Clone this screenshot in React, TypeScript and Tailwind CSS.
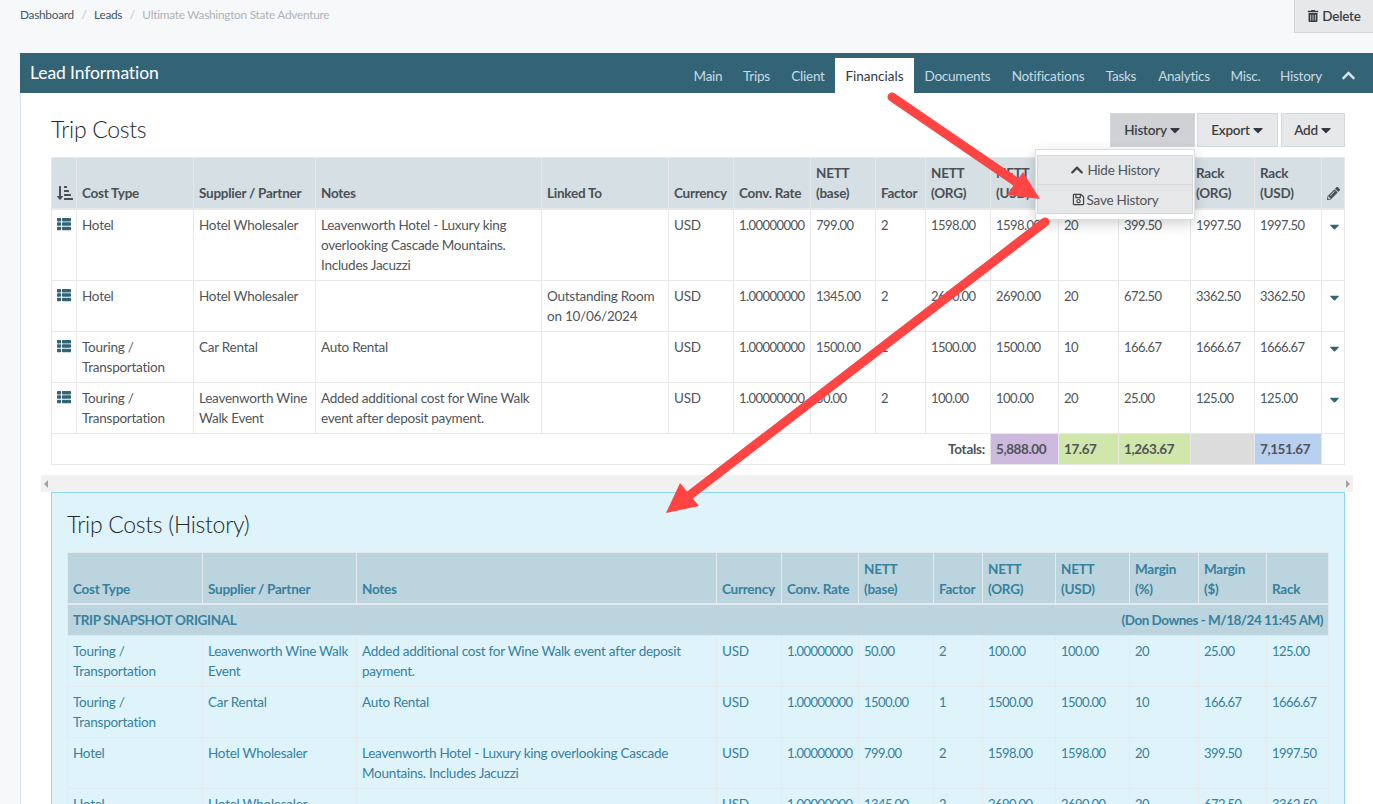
import React from "react";
import { FaThList, FaSortAmountDownAlt, FaPencilAlt, FaChevronUp, FaTrashAlt, FaRegSave, FaCaretDown } from "react-icons/fa";

const topCols = [25, 117, 122, 226, 127, 65, 77, 65, 50, 65, 68, 60, 72, 64, 67, 23];
const histCols = [135, 154, 360, 65, 77, 75, 49, 73, 74, 69, 68, 62];

const tabs: [string, number, boolean?][] = [
  ["Main", 48], ["Trips", 49], ["Client", 54], ["Financials", 79, true], ["Documents", 87],
  ["Notifications", 94], ["Tasks", 52], ["Analytics", 74], ["Misc.", 49], ["History", 62],
];

const topHead = ["Cost Type", "Supplier / Partner", "Notes", "Linked To", "Currency", "Conv. Rate", "NETT (base)", "Factor", "NETT (ORG)", "NETT (USD)", "Margin (%)", "Margin ($)", "Rack (ORG)", "Rack (USD)"];

const topRows = [
  ["Hotel", "Hotel Wholesaler", "Leavenworth Hotel - Luxury king overlooking Cascade Mountains. Includes Jacuzzi", "", "USD", "1.00000000", "799.00", "2", "1598.00", "1598.00", "20", "399.50", "1997.50", "1997.50"],
  ["Hotel", "Hotel Wholesaler", "", "Outstanding Room on 10/06/2024", "USD", "1.00000000", "1345.00", "2", "2690.00", "2690.00", "20", "672.50", "3362.50", "3362.50"],
  ["Touring / Transportation", "Car Rental", "Auto Rental", "", "USD", "1.00000000", "1500.00", "1", "1500.00", "1500.00", "10", "166.67", "1666.67", "1666.67"],
  ["Touring / Transportation", "Leavenworth Wine Walk Event", "Added additional cost for Wine Walk event after deposit payment.", "", "USD", "1.00000000", "50.00", "2", "100.00", "100.00", "20", "25.00", "125.00", "125.00"],
];

const histHead = ["Cost Type", "Supplier / Partner", "Notes", "Currency", "Conv. Rate", "NETT (base)", "Factor", "NETT (ORG)", "NETT (USD)", "Margin (%)", "Margin ($)", "Rack"];

const histRows = [
  ["Touring / Transportation", "Leavenworth Wine Walk Event", "Added additional cost for Wine Walk event after deposit payment.", "USD", "1.00000000", "50.00", "2", "100.00", "100.00", "20", "25.00", "125.00"],
  ["Touring / Transportation", "Car Rental", "Auto Rental", "USD", "1.00000000", "1500.00", "1", "1500.00", "1500.00", "10", "166.67", "1666.67"],
  ["Hotel", "Hotel Wholesaler", "Leavenworth Hotel - Luxury king overlooking Cascade Mountains. Includes Jacuzzi", "USD", "1.00000000", "799.00", "2", "1598.00", "1598.00", "20", "399.50", "1997.50"],
  ["Hotel", "Hotel Wholesaler", "", "USD", "1.00000000", "1345.00", "2", "2690.00", "2690.00", "20", "672.50", "3362.50"],
];

const isNum = (s: string) => /^[\d.,]+$/.test(s);

function Btn({ label, active, w, extra }: { label: string; active?: boolean; w: string; extra?: string }) {
  return (
    <div className={`${w} ${extra ?? ""} h-[34px] flex items-center justify-center gap-[2px] border border-[#d5d8db] font-semibold text-[#3a3f44] ${active ? "bg-[#cfd1d4]" : "bg-[#e7e8ea]"}`}>
      {label}
      <FaCaretDown className="-mx-[2px] text-[16px] text-[#33383c]" />
    </div>
  );
}

export default function App() {
  return (
    <div className="relative h-[804px] w-[1373px] overflow-hidden bg-[#f7f8fa] pl-5 text-[13.5px] leading-5 tracking-[-0.25px] text-[#4f5559] [font-family:Lato,sans-serif]">
      <div className="flex h-[53px] items-start justify-between">
        <div className="flex gap-[7.5px] pt-[5px] text-[11.8px] text-[#3f5766]">
          <span>Dashboard</span>
          <span className="text-[#c0c4c8]">/</span>
          <span>Leads</span>
          <span className="text-[#c0c4c8]">/</span>
          <span className="text-[#aeb3b8]">Ultimate Washington State Adventure</span>
        </div>
        <div className="flex h-[33px] w-[79px] items-center justify-center gap-[3px] border border-r-0 border-t-0 border-[#d5d8db] bg-[#e7e8ea] font-semibold text-[#3a3f44]">
          <FaTrashAlt className="text-[12px]" />
          Delete
        </div>
      </div>

      <div className="flex h-10 items-end justify-between bg-[#336476] pl-[10px] pr-[17px]">
        <div className="self-center text-[17.5px] font-normal tracking-[-0.1px] text-white">Lead Information</div>
        <div className="flex items-end">
          {tabs.map(([t, w, on]) => (
            <div
              key={t}
              style={{ width: w }}
              className={`flex h-[35px] items-center justify-center ${on ? "bg-white tracking-normal text-[#33383c]" : "text-[#c6dbe3]"}`}
            >
              {t}
            </div>
          ))}
          <div className="flex h-[35px] w-6 items-center justify-end">
            <FaChevronUp className="text-[15px] text-[#d8e6eb]" />
          </div>
        </div>
      </div>

      <div className="border-l border-[#dfe3e7] bg-white pl-[30px] pr-[28px]">
        <div className="flex h-[64px] items-start justify-between pt-5">
          <h2 className="pt-[3px] text-[23px] font-light leading-[26px] tracking-[-0.3px] text-[#23282c]">Trip Costs</h2>
          <div className="flex gap-[2px]">
            <Btn label="History" active w="w-[85px]" />
            <Btn label="Export" w="w-[81px]" />
            <Btn label="Add" w="w-[64px]" extra="ml-px" />
          </div>
        </div>

        <table className="w-[1293px] table-fixed border-collapse">
          <colgroup>
            {topCols.map((w, i) => <col key={i} style={{ width: w }} />)}
          </colgroup>
          <thead>
            <tr className="bg-[#d6dfe4] text-[#4a5055]">
              <th className="border border-b-2 border-[#e6e8ea] px-[5px] py-[5px] align-bottom">
                <FaSortAmountDownAlt className="mb-[2px] text-[16px]" />
              </th>
              {topHead.map((h) => (
                <th key={h} className="border border-b-2 border-[#e6e8ea] px-[5px] py-[5px] text-left align-bottom font-bold tracking-[-0.25px]">{h}</th>
              ))}
              <th className="border border-b-2 border-[#e6e8ea] px-[5px] py-[5px] align-bottom">
                <FaPencilAlt className="mb-[3px] text-[13px]" />
              </th>
            </tr>
          </thead>
          <tbody>
            {topRows.map((r, i) => (
              <tr key={i}>
                <td className="border border-[#e6e8ea] px-[5px] py-[5px] align-top">
                  <FaThList className="mt-[2px] text-[14px] text-[#336476]" />
                </td>
                {r.map((c, j) => (
                  <td key={j} className={`border border-[#e6e8ea] px-[5px] py-[5px] align-top ${isNum(c) ? "text-[13px] tracking-[-0.55px]" : ""}`}>{c}</td>
                ))}
                <td className="border border-[#e6e8ea] px-[5px] py-[5px] align-top">
                  <FaCaretDown className="mt-[4px] text-[15px] text-[#336476]" />
                </td>
              </tr>
            ))}
            <tr className="font-bold">
              <td colSpan={10} className="border border-[#e6e8ea] px-[5px] py-[5px] text-right">Totals:</td>
              <td className="border border-[#e6e8ea] bg-[#cdb9dd] px-[5px] py-[5px] tracking-[-0.4px]">5,888.00</td>
              <td className="border border-[#e6e8ea] bg-[#d0e6ab] px-[5px] py-[5px] tracking-[-0.4px]">17.67</td>
              <td className="border border-[#e6e8ea] bg-[#d0e6ab] px-[5px] py-[5px] tracking-[-0.4px]">1,263.67</td>
              <td className="border border-[#e6e8ea] bg-[#dcdcdc] px-[5px] py-[5px]"></td>
              <td className="border border-[#e6e8ea] bg-[#b9cff0] px-[5px] py-[5px] tracking-[-0.4px]">7,151.67</td>
              <td className="border border-[#e6e8ea] px-[5px] py-[5px]"></td>
            </tr>
          </tbody>
        </table>

        <div className="-ml-[10px] mt-[10px] flex h-[17px] w-[1312px] items-center justify-between bg-[#f1f1f1] px-[3px]">
          <div className="h-0 w-0 border-y-[4px] border-r-[4px] border-y-transparent border-r-[#a3a3a3]" />
          <div className="h-0 w-0 border-y-[4px] border-l-[4px] border-y-transparent border-l-[#a3a3a3]" />
        </div>

        <div className="w-[1294px] border border-b-0 border-[#8fd8f3] bg-[#dff3fb] px-[15px] text-[#35819f]">
          <h2 className="h-[59px] pt-[18px] text-[23px] font-light leading-[26px] tracking-[-0.3px] text-[#23282c]">Trip Costs (History)</h2>
          <table className="w-[1261px] table-fixed border-collapse">
            <colgroup>
              {histCols.map((w, i) => <col key={i} style={{ width: w }} />)}
            </colgroup>
            <thead>
              <tr className="bg-[#bcd4dd]">
                {histHead.map((h) => (
                  <th key={h} className="border border-b-2 border-[#e3e9ec] px-[5px] pb-[4px] pt-[6px] text-left align-bottom font-bold tracking-[-0.25px]">{h}</th>
                ))}
              </tr>
            </thead>
            <tbody>
              <tr className="bg-[#bcd4dd] font-bold">
                <td colSpan={12} className="border border-[#e3e9ec] px-[5px] py-[5px]">
                  <div className="flex justify-between">
                    <span className="tracking-[-0.35px]">TRIP SNAPSHOT ORIGINAL</span>
                    <span className="tracking-[-0.5px]">(Don Downes - M/18/24 11:45 AM)</span>
                  </div>
                </td>
              </tr>
              {histRows.map((r, i) => (
                <tr key={i}>
                  {r.map((c, j) => (
                    <td key={j} className={`border border-[#e3ebee] px-[5px] py-[5px] align-top ${isNum(c) ? "text-[13px] tracking-[-0.55px]" : ""}`}>{c}</td>
                  ))}
                </tr>
              ))}
            </tbody>
          </table>
        </div>
      </div>

      <div className="absolute left-[1035px] top-[149px] h-[71px] w-[160px] border border-[#dcdfe2] bg-white px-px pt-[5px] shadow-[0_4px_12px_rgba(0,0,0,0.18)]">
        <div className="flex h-[30px] items-center justify-center gap-[3px] border border-[#d5d8db] bg-[#e5e7e9]">
          <FaChevronUp className="text-[14px] text-[#3f4448]" />
          Hide History
        </div>
        <div className="flex h-[29px] items-center justify-center gap-[2px] border border-t-0 border-[#d5d8db] bg-[#e5e7e9] pt-px">
          <FaRegSave className="text-[13px] text-[#3f4448]" />
          Save History
        </div>
      </div>

      <svg className="pointer-events-none absolute left-0 top-0" width="1373" height="804" fill="none">
        <line x1="892" y1="97" x2="1022" y2="186" stroke="#ff4444" strokeWidth="9" strokeLinecap="round" />
        <polygon points="1040,199 1023,172 1007,195" fill="#ff4444" />
        <line x1="1045" y1="222" x2="686" y2="498" stroke="#ff4444" strokeWidth="9" strokeLinecap="round" />
        <polygon points="666,513 680,483 699,506" fill="#ff4444" />
      </svg>
    </div>
  );
}
